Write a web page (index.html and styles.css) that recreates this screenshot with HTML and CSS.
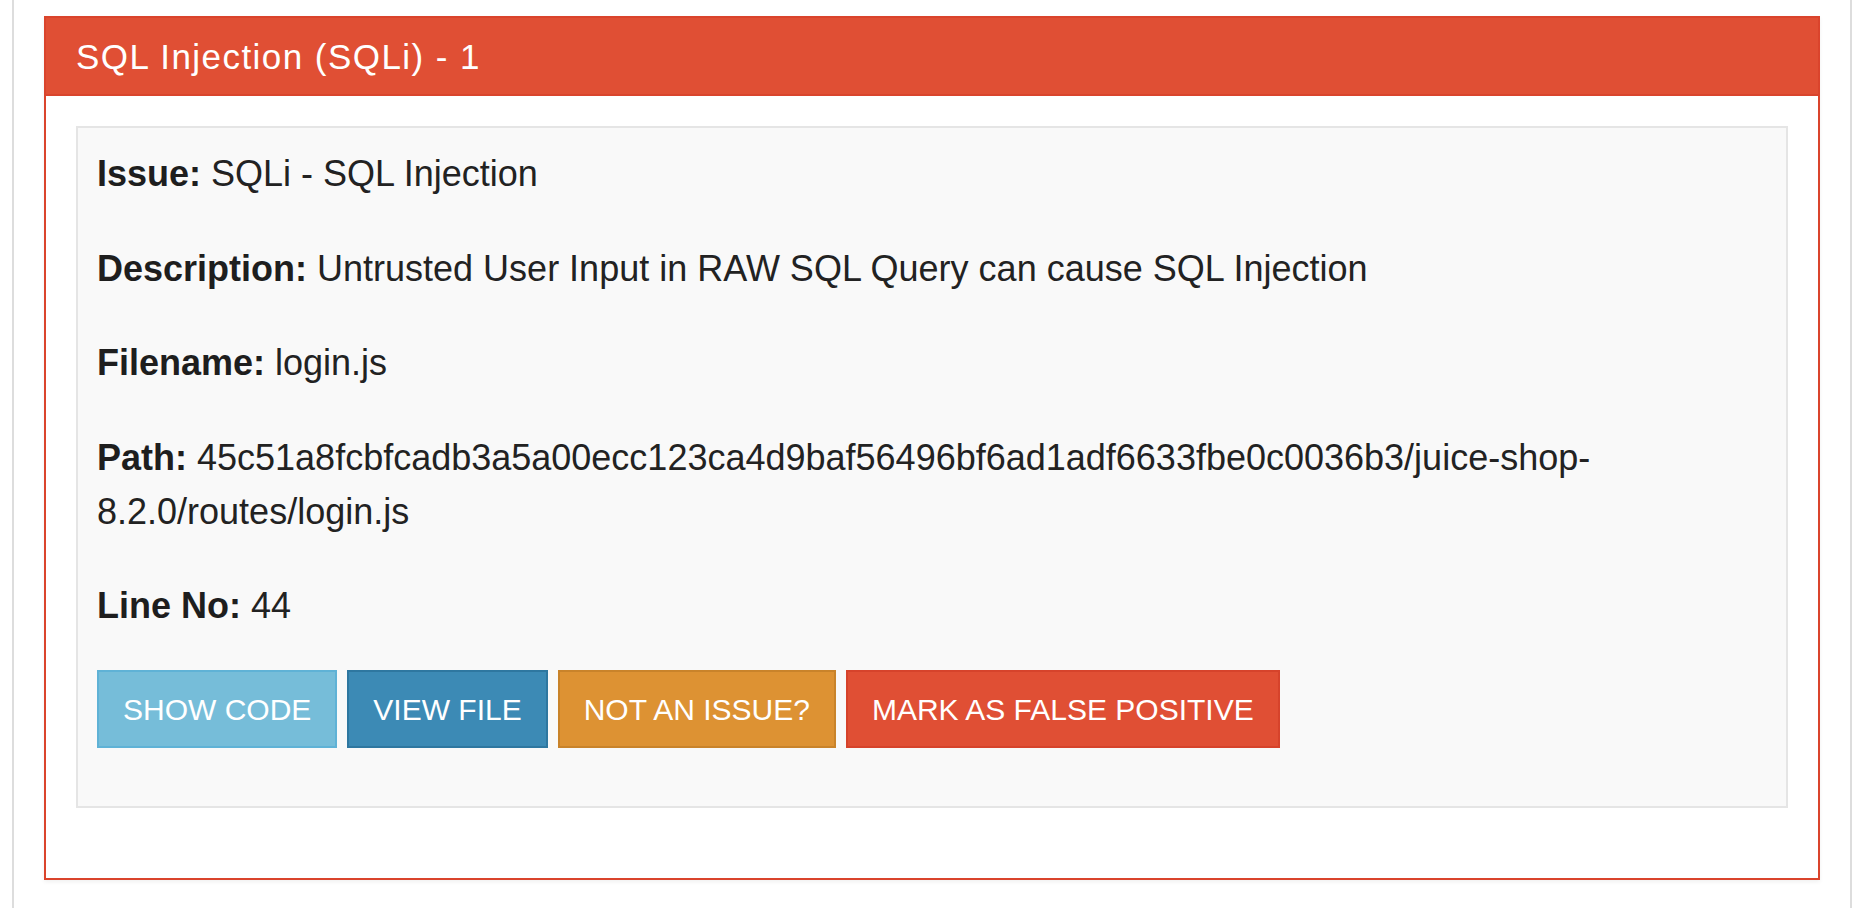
FILE: index.html
```html
<!DOCTYPE html>
<html lang="en">
<head>
<meta charset="utf-8">
<title>SQL Injection (SQLi) - 1</title>
<link rel="stylesheet" href="styles.css">
</head>
<body>
<div class="page">
  <section class="panel">
    <header class="panel-heading">
      <h3 class="panel-title">SQL Injection (SQLi) - 1</h3>
    </header>
    <div class="panel-body">
      <div class="well">
        <p class="row-item"><b>Issue:</b> SQLi - SQL Injection</p>
        <p class="row-item"><b>Description:</b> Untrusted User Input in RAW SQL Query can cause SQL Injection</p>
        <p class="row-item"><b>Filename:</b> login.js</p>
        <p class="row-item"><b>Path:</b> 45c51a8fcbfcadb3a5a00ecc123ca4d9baf56496bf6ad1adf6633fbe0c0036b3/juice-shop-<br>8.2.0/routes/login.js</p>
        <p class="row-item row-last"><b>Line No:</b> 44</p>
        <div class="actions">
          <button class="btn btn-info">SHOW CODE</button>
          <button class="btn btn-primary">VIEW FILE</button>
          <button class="btn btn-warning">NOT AN ISSUE?</button>
          <button class="btn btn-danger">MARK AS FALSE POSITIVE</button>
        </div>
      </div>
    </div>
  </section>
</div>
</body>
</html>
```

FILE: styles.css
```css
html, body {
  margin: 0;
  padding: 0;
  background: #ffffff;
  height: 100%;
}

body {
  font-family: "Liberation Sans", Arial, Helvetica, sans-serif;
  color: #222222;
}

.page {
  margin-left: 12px;
  min-height: 908px;
  box-sizing: border-box;
  border-left: 2px solid #dddddd;
  border-right: 2px solid #dddddd;
  padding: 16px 30px 28px 30px;
}

.panel {
  border: 2px solid #da442c;
  background: #ffffff;
  box-shadow: 0 2px 4px rgba(0, 0, 0, 0.06);
}

.panel-heading {
  background: #e04f34;
  border-bottom: 2px solid #d9452d;
  height: 76px;
  display: flex;
  align-items: center;
  padding: 0 30px;
}

.panel-title {
  margin: 0;
  font-weight: normal;
  font-size: 35px;
  letter-spacing: 1.45px;
  color: #ffffff;
  line-height: 40px;
  padding-top: 1px;
}

.panel-body {
  padding: 30px;
}

.well {
  background: #f9f9f9;
  border: 2px solid #e5e5e5;
  padding: 19px 19px 19px 19px;
  margin-bottom: 40px;
}

.row-item {
  margin: 0 0 40.5px 0;
  font-size: 36px;
  line-height: 54px;
  color: #222222;
}

.row-item.row-last {
  margin-bottom: 37px;
}

.row-item b {
  font-weight: bold;
  color: #1e1e1e;
}

.actions {
  display: flex;
  gap: 10px;
  margin-bottom: 39px;
}

.btn {
  font-family: "Liberation Sans", Arial, Helvetica, sans-serif;
  font-size: 30px;
  line-height: 42px;
  padding: 17px 24px 15px 24px;
  border: 2px solid transparent;
  border-radius: 0;
  color: #ffffff;
  cursor: pointer;
  white-space: nowrap;
}

.btn-info {
  background: #76bdd9;
  border-color: #5fb2d6;
}

.btn-primary {
  background: #3c8ab5;
  border-color: #2e77a0;
}

.btn-warning {
  background: #dd9233;
  border-color: #c9832a;
}

.btn-danger {
  background: #e04f34;
  border-color: #d6432b;
}
```
